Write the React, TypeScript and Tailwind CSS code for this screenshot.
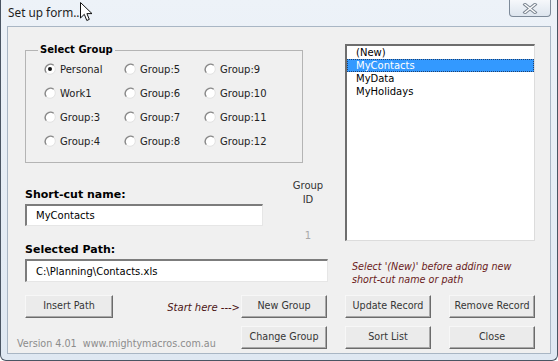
import React from "react";

const RADIOS = [
  ["Personal", "Group:5", "Group:9"],
  ["Work1", "Group:6", "Group:10"],
  ["Group:3", "Group:7", "Group:11"],
  ["Group:4", "Group:8", "Group:12"],
];

const ITEMS = ["(New)", "MyContacts", "MyData", "MyHolidays"];

function Radio({ checked }: { checked?: boolean }) {
  return (
    <svg width="12" height="12" viewBox="0 0 12 12" className="shrink-0">
      <circle cx="6" cy="6" r="5.3" fill="#ffffff" stroke="#e2e2e2" strokeWidth="1" />
      <path d="M2.3 9.7 A5.3 5.3 0 0 1 9.7 2.3" fill="none" stroke="#8a8a8a" strokeWidth="1.4" />
      {checked && <circle cx="6" cy="6" r="2" fill="#111111" />}
    </svg>
  );
}

function Button({ label, wide }: { label: string; wide?: boolean }) {
  return (
    <div
      className={`flex h-[23px] shrink-0 items-center justify-center border border-t-[#f7f7f7] border-l-[#f7f7f7] border-r-[#6b6b6b] border-b-[#6b6b6b] bg-[#ebebeb] text-[9.6px] text-[#363636] shadow-[inset_-1px_-1px_0_#a8a8a8] ${
        wide ? "w-[88px]" : "w-[86px]"
      }`}
    >
      {label}
    </div>
  );
}

function Field({ value, h }: { value: string; h: string }) {
  return (
    <div
      className={`flex w-full items-center border-t-2 border-l-2 border-r border-b border-t-[#7c7c7c] border-l-[#7c7c7c] border-r-[#e6e6e6] border-b-[#e6e6e6] bg-white pl-[9px] text-[10px] text-black ${h}`}
    >
      {value}
    </div>
  );
}

export default function App() {
  return (
    <div
      className="relative flex h-[361px] w-[558px] flex-col overflow-hidden rounded-b-[6px] border-x border-b border-[#4a5563] bg-gradient-to-b from-[#edf2f8] to-[#dfe8f2]"
      style={{ fontFamily: '"DejaVu Sans", sans-serif' }}
    >
      {/* Title bar */}
      <div className="flex h-[26px] shrink-0 items-start">
        <span
          className="ml-[7px] mt-[5px] text-[11.8px] leading-[15px] text-[#1e1e1e]"
          style={{ fontFamily: '"Noto Sans", sans-serif' }}
        >
          Set up form...
        </span>
        <div className="ml-auto mr-[6px] flex h-[17px] w-[42px] items-center justify-center rounded-b-[4px] border-x border-b border-[#7d8a99] bg-gradient-to-b from-[#f6f8fb] to-[#dde5ee]">
          <svg width="16" height="11" viewBox="0 0 16 11">
            <path d="M3 1.5 L13 9.5 M13 1.5 L3 9.5" stroke="#7b8591" strokeWidth="3.4" strokeLinecap="square" />
            <path d="M3 1.5 L13 9.5 M13 1.5 L3 9.5" stroke="#ffffff" strokeWidth="1.4" strokeLinecap="square" />
          </svg>
        </div>
      </div>

      {/* Client area */}
      <div className="flex flex-1 px-[6px] pb-[6px]">
        <div className="flex flex-1 flex-col border border-[#a9b6c4] bg-[#f0f0f0] text-black">
          {/* Row 1: group box + short-cut, list */}
          <div className="mt-[17px] flex items-start">
            <div className="ml-[17px] flex w-[303px] flex-col">
              <fieldset className="w-[278px] border border-[#b4b4b4] pb-[9px]">
                <legend className="ml-[12px] px-[2px] text-[10px] font-bold leading-[12px]">Select Group</legend>
                <div className="grid grid-cols-[80px_80px_80px] pl-[18px] pt-[1px]">
                  {RADIOS.flat().map((label, i) => (
                    <div key={label} className="flex h-[24px] items-center gap-[4px] text-[10px] text-[#222222]">
                      <Radio checked={i === 0} />
                      <span>{label}</span>
                    </div>
                  ))}
                </div>
              </fieldset>

              <div className="flex items-start">
                <div className="mt-[25px] flex w-[238px] flex-col">
                  <span className="text-[11px] font-bold leading-[14px]">Short-cut name:</span>
                  <div className="mt-[2px]">
                    <Field value="MyContacts" h="h-[22px]" />
                  </div>
                </div>
                <div className="ml-[25px] mt-[16px] flex w-[40px] flex-col items-center text-[10px] leading-[14px] text-[#333333]">
                  <span>Group</span>
                  <span>ID</span>
                  <span className="mt-[22px] text-[#a8a8a8]">1</span>
                </div>
              </div>
            </div>

            {/* List box */}
            <div className="ml-[17px] flex h-[197px] w-[190px] flex-col border-t-2 border-l-2 border-r border-b border-t-[#6e6e6e] border-l-[#6e6e6e] border-r-[#dcdcdc] border-b-[#dcdcdc] bg-white text-[10px] leading-[13px]">
              {ITEMS.map((item) =>
                item === "MyContacts" ? (
                  <div key={item} className="border border-dotted border-[#23406b] bg-[#3399ff] pl-[8px] leading-[11px] text-white">
                    {item}
                  </div>
                ) : (
                  <div key={item} className="pl-[9px]">
                    {item}
                  </div>
                ),
              )}
            </div>
          </div>

          {/* Row 2: path */}
          <div className="flex items-start">
            <div className="ml-[17px] flex w-[303px] flex-col">
              <span className="text-[11px] font-bold leading-[14px]">Selected Path:</span>
              <div className="mt-[2px]">
                <Field value="C:\Planning\Contacts.xls" h="h-[23px]" />
              </div>
            </div>
            <div className="ml-[24px] mt-[17px] flex flex-col text-[9.6px] italic leading-[13px] text-[#6a1b1b]">
              <span>Select '(New)' before adding new</span>
              <span>short-cut name or path</span>
            </div>
          </div>

          {/* Row 3 */}
          <div className="mt-[9px] flex items-start pl-[17px] pr-[15px]">
            <Button label="Insert Path" wide />
            <span className="ml-auto mr-[1px] mt-[7px] text-[10px] italic leading-[12px] text-[#4a1414]">Start here ---&gt;</span>
            <Button label="New Group" />
            <div className="ml-[18px]">
              <Button label="Update Record" />
            </div>
            <div className="ml-[18px]">
              <Button label="Remove Record" />
            </div>
          </div>

          {/* Row 4 */}
          <div className="mt-[8px] flex items-start pl-[9px] pr-[15px]">
            <span className="mt-[12px] text-[9.6px] leading-[12px] text-[#8c8c8c]">
              Version 4.01&nbsp; www.mightymacros.com.au
            </span>
            <div className="ml-auto">
              <Button label="Change Group" />
            </div>
            <div className="ml-[18px]">
              <Button label="Sort List" />
            </div>
            <div className="ml-[18px]">
              <Button label="Close" />
            </div>
          </div>
        </div>
      </div>

      {/* Mouse pointer */}
      <svg className="pointer-events-none absolute left-[79px] top-[2px]" width="13" height="20" viewBox="0 0 13 20">
        <path d="M0.5 0.5 L0.5 16 L4.3 12.3 L6.8 18.5 L9.3 17.4 L6.9 11.6 L12 11.6 Z" fill="#ffffff" stroke="#111111" strokeWidth="1" strokeLinejoin="miter" />
      </svg>
    </div>
  );
}
